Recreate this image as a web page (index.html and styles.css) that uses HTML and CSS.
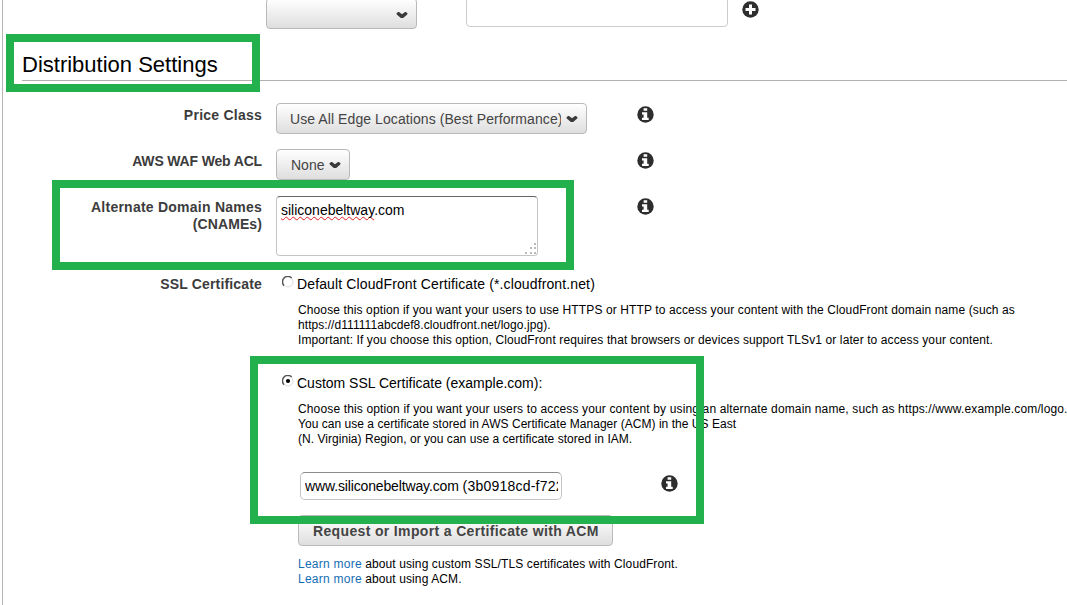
FILE: index.html
```html
<!DOCTYPE html>
<html lang="en">
<head>
<meta charset="utf-8">
<title>Distribution Settings</title>
<link rel="stylesheet" href="styles.css">
</head>
<body>
<svg class="sprite" width="0" height="0">
  <symbol id="chevron" viewBox="0 0 12 8"><path d="M.4 2.4 L2 .9 L3 .9 L6 3.3 L9 .9 L10 .9 L11.6 2.4 L11.2 3.4 L7.2 7.1 H4.8 L.8 3.4 Z"/></symbol>
  <symbol id="info" viewBox="0 0 17 17"><circle cx="8.5" cy="8.5" r="8.2" fill="#2d2d2d"/><path fill="#fff" d="M6.6 2.2h3.6v2.6H6.6z M5 6.2h5.2v5.6h1.5v2.2H5v-2.2h1.6V8.4H5z"/></symbol>
  <symbol id="plus" viewBox="0 0 17 17"><circle cx="8.5" cy="8.5" r="8.2" fill="#2d2d2d"/><path fill="#fff" d="M7 3.5h3V7h3.5v3H10v3.5H7V10H3.5V7H7z"/></symbol>
</svg>
<main class="panel">
  <div class="origin-row">
    <div class="select select-blank"><svg class="chevron"><use href="#chevron"/></svg></div>
    <div class="text-field"></div>
    <svg class="icon"><use href="#plus"/></svg>
  </div>
  <h2 class="heading">Distribution Settings</h2>
  <div class="row row-select">
    <div class="label">Price Class</div>
    <div class="control"><div class="select select-price"><span class="select-text">Use All Edge Locations (Best Performance)</span><svg class="chevron"><use href="#chevron"/></svg></div></div>
    <svg class="icon"><use href="#info"/></svg>
  </div>
  <div class="row row-select">
    <div class="label label-acl">AWS WAF Web ACL</div>
    <div class="control"><div class="select select-acl"><span class="select-text">None</span><svg class="chevron"><use href="#chevron"/></svg></div></div>
    <svg class="icon"><use href="#info"/></svg>
  </div>
  <div class="row row-names">
    <div class="label">Alternate Domain Names<br><span class="label-cnames">(CNAMEs)</span></div>
    <div class="control"><div class="textarea"><span class="misspelled">siliconebeltway</span>.com
      <svg class="grip" viewBox="0 0 11 11"><path d="M9 0h2v2H9z M5 4h2v2H5z M9 4h2v2H9z M0 9h2v2H0z M5 9h2v2H5z M9 9h2v2H9z"/></svg></div></div>
    <svg class="icon"><use href="#info"/></svg>
  </div>
  <div class="row row-ssl">
    <div class="label">SSL Certificate</div>
    <div class="certificate">
      <div class="option">
        <svg class="radio" viewBox="0 0 12 12"><circle cx="6" cy="6" r="5" fill="#fff" stroke="#ddd"/><path d="M2 9.7A5.2 5.2 0 0 1 9.7 2" fill="none" stroke="#555" stroke-width="1.4"/></svg>
        <span class="option-wide">Default CloudFront Certificate (*.cloudfront.net)</span>
      </div>
      <p class="help"><span class="track-l">Choose this option if you want your users to use HTTPS or HTTP to access your content with the CloudFront domain name (such as</span><br><span class="track-s">https://d111111abcdef8.cloudfront.net/logo.jpg).</span><br><span class="track-m">Important: If you choose this option, CloudFront requires that browsers or devices support TLSv1 or later to access your content.</span></p>
      <div class="option option-custom">
        <svg class="radio" viewBox="0 0 12 12"><circle cx="6" cy="6" r="5" fill="#fff" stroke="#ddd"/><path d="M2 9.7A5.2 5.2 0 0 1 9.7 2" fill="none" stroke="#555" stroke-width="1.4"/><circle cx="6" cy="6" r="2.1"/></svg>
        <span>Custom SSL Certificate (example.com):</span>
      </div>
      <p class="help"><span class="track-xl">Choose this option if you want your users to access your content by using an alternate domain name, such as https://www.example.com/logo.jpg.</span><br><span class="track-xs">You can use a certificate stored in AWS Certificate Manager (ACM) in the US East</span><br><span class="track-xs">(N. Virginia) Region, or you can use a certificate stored in IAM.</span></p>
      <div class="cert-field">
        <div class="cert-input"><div class="cert-value"><span class="cert-domain">www.siliconebeltway.com</span> <span class="cert-id">(3b0918cd-f722</span></div></div>
        <svg class="icon"><use href="#info"/></svg>
      </div>
      <div class="button">Request or Import a Certificate with ACM</div>
      <p class="help links"><a>Learn more</a> <span class="track-m">about using custom SSL/TLS certificates with CloudFront.</span><br><a>Learn more</a> <span class="track-m">about using ACM.</span></p>
    </div>
  </div>
</main>
<div class="highlight highlight-heading"></div>
<div class="highlight highlight-names"></div>
<div class="highlight highlight-custom"></div>
</body>
</html>
```
FILE: styles.css
```css
* { box-sizing: border-box; }
body { margin: 0; width: 1067px; height: 605px; overflow: hidden; position: relative; background: #fff; color: #000; font-family: "Liberation Sans", Arial, sans-serif; font-size: 14px; }
svg { display: block; }
.sprite { position: absolute; }
.panel { margin-left: 2px; height: 605px; border-left: 1px solid #b5b5b5; overflow: hidden; white-space: nowrap; }
.origin-row { height: 29px; padding-left: 263px; display: flex; align-items: flex-start; }
.select { height: 31px; border: 1px solid #b9b9b9; border-radius: 4px; background: linear-gradient(#fff, #dedede); display: flex; align-items: center; color: #444; }
.select-blank { width: 151px; height: 31px; margin-top: -2px; justify-content: flex-end; padding: 2px 8px 0 0; }
.text-field { width: 262px; height: 30px; margin: -3px 14px 0 49px; border: 1px solid #ccc; border-radius: 4px; }
.icon { width: 17px; height: 17px; margin-top: 1px; flex: none; }
.chevron { width: 12px; height: 8px; fill: #3a3a3a; flex: none; }
.heading { margin: 0 0 0 19px; height: 52px; padding-top: 22px; border-bottom: 1px solid #b0b0b0; font-size: 22px; line-height: 28px; font-weight: 400; }
.row { display: grid; grid-template-columns: 259px 361px 17px; align-items: start; }
.row-select { height: 46px; }
.heading + .row { margin-top: 22px; }
.label { text-align: right; font-weight: 700; color: #3c3c3c; line-height: 17px; padding-top: 4px; letter-spacing: .24px; }
.label-acl { letter-spacing: -.16px; }
.label-cnames { letter-spacing: .1px; }
.control { padding-left: 14px; }
.select-price { width: 311px; padding: 1px 8px 0 13px; justify-content: space-between; }
.select-price .select-text { width: 271px; overflow: hidden; letter-spacing: .08px; }
.select-acl { width: 74px; padding: 1px 8px 0 14px; justify-content: space-between; }
.row .icon { margin: 3px 0 0 14px; }
.row-names { height: 79px; padding-top: 1px; }
.row-names .label { padding-top: 3px; }
.row-names .icon { margin-top: 2px; }
.textarea { position: relative; width: 262px; height: 60px; border: 1px solid #c4c4c4; border-top-color: #666; border-radius: 4px; padding: 5px 4px; line-height: 17px; }
.misspelled { text-decoration: underline wavy #e02020 1px; text-underline-offset: 1px; text-decoration-skip-ink: none; }
.grip { position: absolute; right: 1px; bottom: 1px; width: 11px; height: 11px; fill: #bbb; }
.row-ssl { grid-template-columns: 259px 1fr; }
.row-ssl .label { padding-top: 2px; letter-spacing: .16px; }
.certificate { padding-left: 20px; }
.option { display: flex; height: 21px; gap: 3px; line-height: 17px; }
.option span { padding-top: 2px; }
.option-wide { letter-spacing: .125px; }
.option .radio { width: 12px; height: 12px; margin-top: 2px; }
.help { margin: 8px 0 0 16px; font-size: 12px; line-height: 15px; }
.track-xs { letter-spacing: .035px; }
.track-s { letter-spacing: .06px; }
.track-m { letter-spacing: .105px; }
.track-l { letter-spacing: .118px; }
.track-xl { letter-spacing: .14px; }
.option-custom { margin-top: 25px; }
.cert-field { display: flex; margin: 25px 0 0 18px; height: 28px; }
.cert-input { width: 262px; height: 28px; border: 1px solid #c4c4c4; border-top-color: #8c8c8c; border-radius: 5px; padding: 5px 4px; line-height: 17px; }
.cert-value { width: 253px; overflow: hidden; }
.cert-domain { letter-spacing: -.14px; }
.cert-id { letter-spacing: .22px; }
.cert-field .icon { margin: 3px 0 0 99px; }
.row-ssl .cert-field .icon { margin-left: 99px; }
.button { width: 315px; height: 31px; margin: 15px 0 0 16px; border: 1px solid #bbb; border-radius: 4px; background: linear-gradient(#fff, #dedede); color: #444; font-weight: 700; line-height: 31px; padding-left: 14px; letter-spacing: .35px; }
.links { margin-top: 11px; }
.links a { color: #146eb4; letter-spacing: .25px; }
.highlight { position: absolute; border: 8px solid #22b14c; }
.highlight-heading { left: 6px; top: 34px; width: 254px; height: 58px; }
.highlight-names { left: 52px; top: 180px; width: 522px; height: 90px; }
.highlight-custom { left: 250px; top: 356px; width: 454px; height: 168px; }
```
